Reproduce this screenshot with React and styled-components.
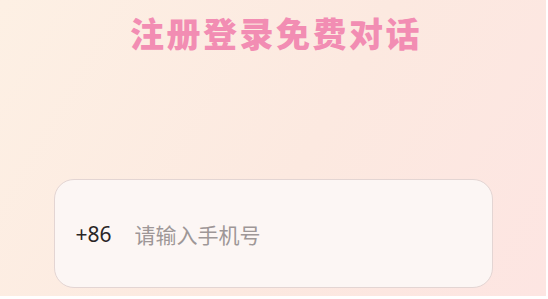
import React from "react";
import styled, { createGlobalStyle } from "styled-components";

const Global = createGlobalStyle`
  html, body { margin: 0; padding: 0; background: #ffffff; }
  body { font-family: "Noto Sans CJK SC", "Noto Sans", sans-serif; }
`;

const Page = styled.div`
  width: 546px;
  height: 296px;
  background: linear-gradient(120deg, #fdf0e4 0%, #fce9e0 55%, #fde5e2 100%);
  display: flex;
  flex-direction: column;
  align-items: center;
  box-sizing: border-box;
  padding-top: 11px;
`;

const Title = styled.h1`
  margin: 0;
  font-family: "Noto Sans CJK SC", sans-serif;
  font-weight: 900;
  font-size: 34px;
  line-height: 44px;
  letter-spacing: 2.5px;
  color: #f28db3;
  padding-left: 6px;
`;

const Field = styled.label`
  margin-top: 124px;
  width: 439px;
  height: 109px;
  box-sizing: border-box;
  border: 1.5px solid #e3d5d3;
  border-radius: 20px;
  background: #fcf6f4;
  display: flex;
  align-items: center;
  padding-left: 21px;
  gap: 23px;
`;

const Prefix = styled.span`
  font-family: "Noto Sans", sans-serif;
  font-size: 21px;
  color: #2a2526;
`;

const Input = styled.input`
  flex: 1;
  border: none;
  outline: none;
  background: transparent;
  font-family: "Noto Sans CJK SC", sans-serif;
  font-size: 21px;
  color: #333;
  padding: 0;
  &::placeholder { color: #9e9797; }
`;

export default function App() {
  return (
    <>
      <Global />
      <Page>
        <Title>注册登录免费对话</Title>
        <Field>
          <Prefix>+86</Prefix>
          <Input placeholder="请输入手机号" />
        </Field>
      </Page>
    </>
  );
}
